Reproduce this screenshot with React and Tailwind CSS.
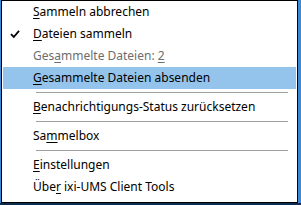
import React from "react";

const font = { fontFamily: '"Noto Sans", "Open Sans", sans-serif' };

function Item({ children, disabled, checked, active }) {
  return (
    <div
      className={
        "relative mx-[1px] h-[22px] flex items-center pl-[30px] text-[12px] leading-none " +
        (active ? "bg-[#94c4ec] " : "") +
        (disabled ? "text-[#6d6d6d]" : "text-black")
      }
    >
      {checked && (
        <svg
          className="absolute left-[7px] top-[6px]"
          width="10"
          height="10"
          viewBox="0 0 10 10"
        >
          <path d="M1 5.2 L3.8 8 L9 1.8" fill="none" stroke="#000" strokeWidth="1.8" />
        </svg>
      )}
      <span>{children}</span>
    </div>
  );
}

function Sep() {
  return (
    <div className="h-[7px] flex items-center pl-[34px] pr-[9px]">
      <div className="h-[1px] w-full bg-[#a0a0a0]" />
    </div>
  );
}

const U = ({ children }) => <span className="underline underline-offset-2">{children}</span>;

export default function App() {
  return (
    <div className="w-[301px] h-[205px] bg-[#3b8ad8] flex flex-col" style={font}>
      <div className="ml-[1px] w-[297px] h-[203px] border border-black bg-white flex flex-col">
        <Item><U>S</U>ammeln abbrechen</Item>
        <Item checked><U>D</U>ateien sammeln</Item>
        <Item disabled>Ges<U>a</U>mmelte Dateien: <U>2</U></Item>
        <Item active><U>G</U>esammelte Dateien absenden</Item>
        <Sep />
        <Item><U>B</U>enachrichtigungs-Status zurücksetzen</Item>
        <Sep />
        <Item>Sa<U>m</U>melbox</Item>
        <Sep />
        <Item><U>E</U>instellungen</Item>
        <Item>Übe<U>r</U> ixi-UMS Client Tools</Item>
      </div>
      <div className="h-[2px] w-full bg-[#0c2d50]" />
    </div>
  );
}
